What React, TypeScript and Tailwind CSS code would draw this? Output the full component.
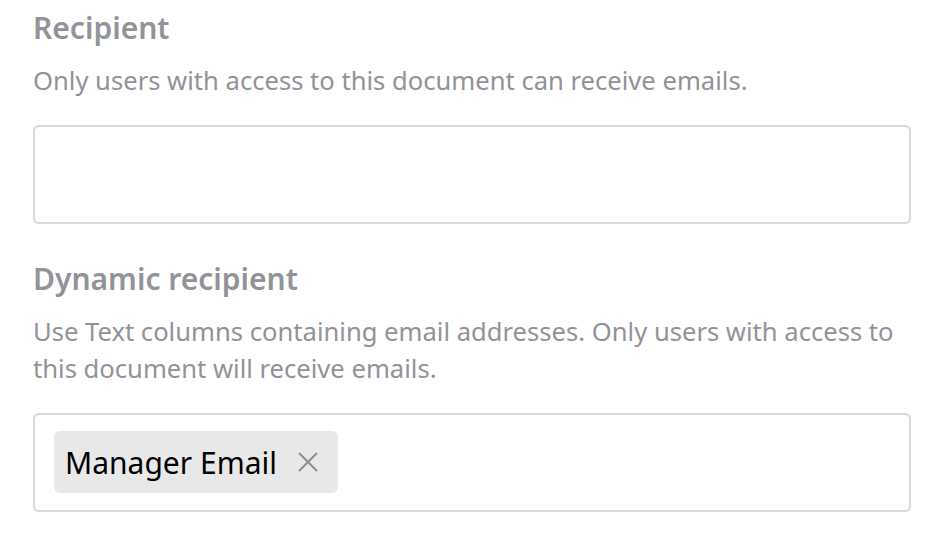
import { FC } from 'react'

const Section: FC<{ title: string; desc: string; children?: React.ReactNode }> = ({ title, desc, children }) => (
    <div className="flex flex-col">
        <div className="text-[30px] leading-[40px] font-semibold text-[#929299]">{title}</div>
        <div className="mt-[14px] text-[25.6px] leading-[37px] text-[#929299]">{desc}</div>
        <div className="mt-[26px] h-[99px] rounded-[6px] border-2 border-[#d9d9d9] bg-white pt-[16px] pl-[19px]">
            {children}
        </div>
    </div>
)

export default function App() {
    return (
        <div
            className="w-[945px] h-[537px] bg-white pl-[33px] pr-[34px] pt-[8px] flex flex-col gap-[35px] overflow-hidden"
            style={{ fontFamily: '"Noto Sans", sans-serif' }}
        >
            <Section title="Recipient" desc="Only users with access to this document can receive emails." />
            <Section
                title="Dynamic recipient"
                desc="Use Text columns containing email addresses. Only users with access to this document will receive emails."
            >
                <div className="inline-flex h-[62px] items-center rounded-[6px] bg-[#e8e8e8] pl-[11px] pr-[20px]">
                    <span className="text-[30px] text-black">Manager Email</span>
                    <svg className="ml-[21px]" width="20" height="20" viewBox="0 0 20 20" fill="none">
                        <path d="M1 1L19 19M19 1L1 19" stroke="#8e8e8e" strokeWidth="2" />
                    </svg>
                </div>
            </Section>
        </div>
    )
}
